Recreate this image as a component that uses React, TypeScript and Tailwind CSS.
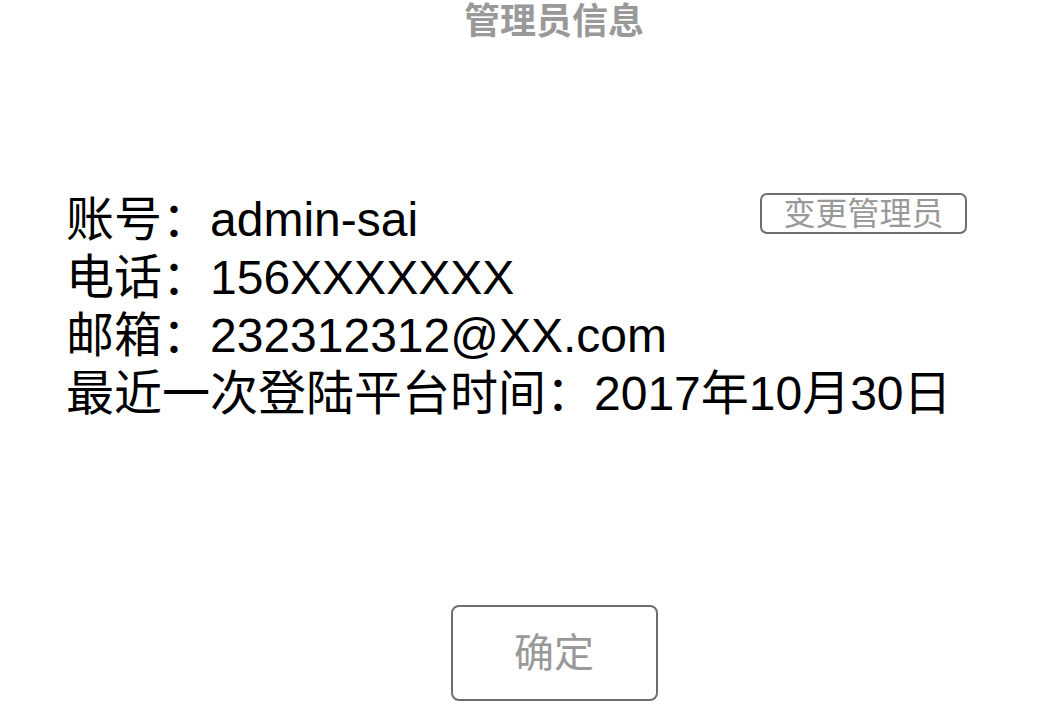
export default function App() {
  return (
    <div
      className="min-h-screen bg-white pl-[66px]"
      style={{ fontFamily: '"Liberation Sans", "Noto Sans CJK SC", sans-serif' }}
    >
      <h1 className="text-center text-[36px] leading-[44px] font-bold text-[#999999]">
        管理员信息
      </h1>

      <div className="mt-[147px] pr-[75px] text-[48px] leading-[58px] text-black">
        <div className="flex items-start justify-between">
          <p>账号：admin-sai</p>
          <button className="mt-[2px] h-[41px] w-[207px] rounded-[7px] border-2 border-[#6e6e6e] text-[32px] leading-none text-[#999999]">
            变更管理员
          </button>
        </div>
        <p>电话：156XXXXXXX</p>
        <p>邮箱：232312312@XX.com</p>
        <p>最近一次登陆平台时间：2017年10月30日</p>
      </div>

      <div className="mt-[182px] flex justify-center">
        <button className="h-[96px] w-[207px] rounded-[8px] border-2 border-[#6e6e6e] text-[40px] leading-none text-[#999999]">
          确定
        </button>
      </div>
    </div>
  );
}
